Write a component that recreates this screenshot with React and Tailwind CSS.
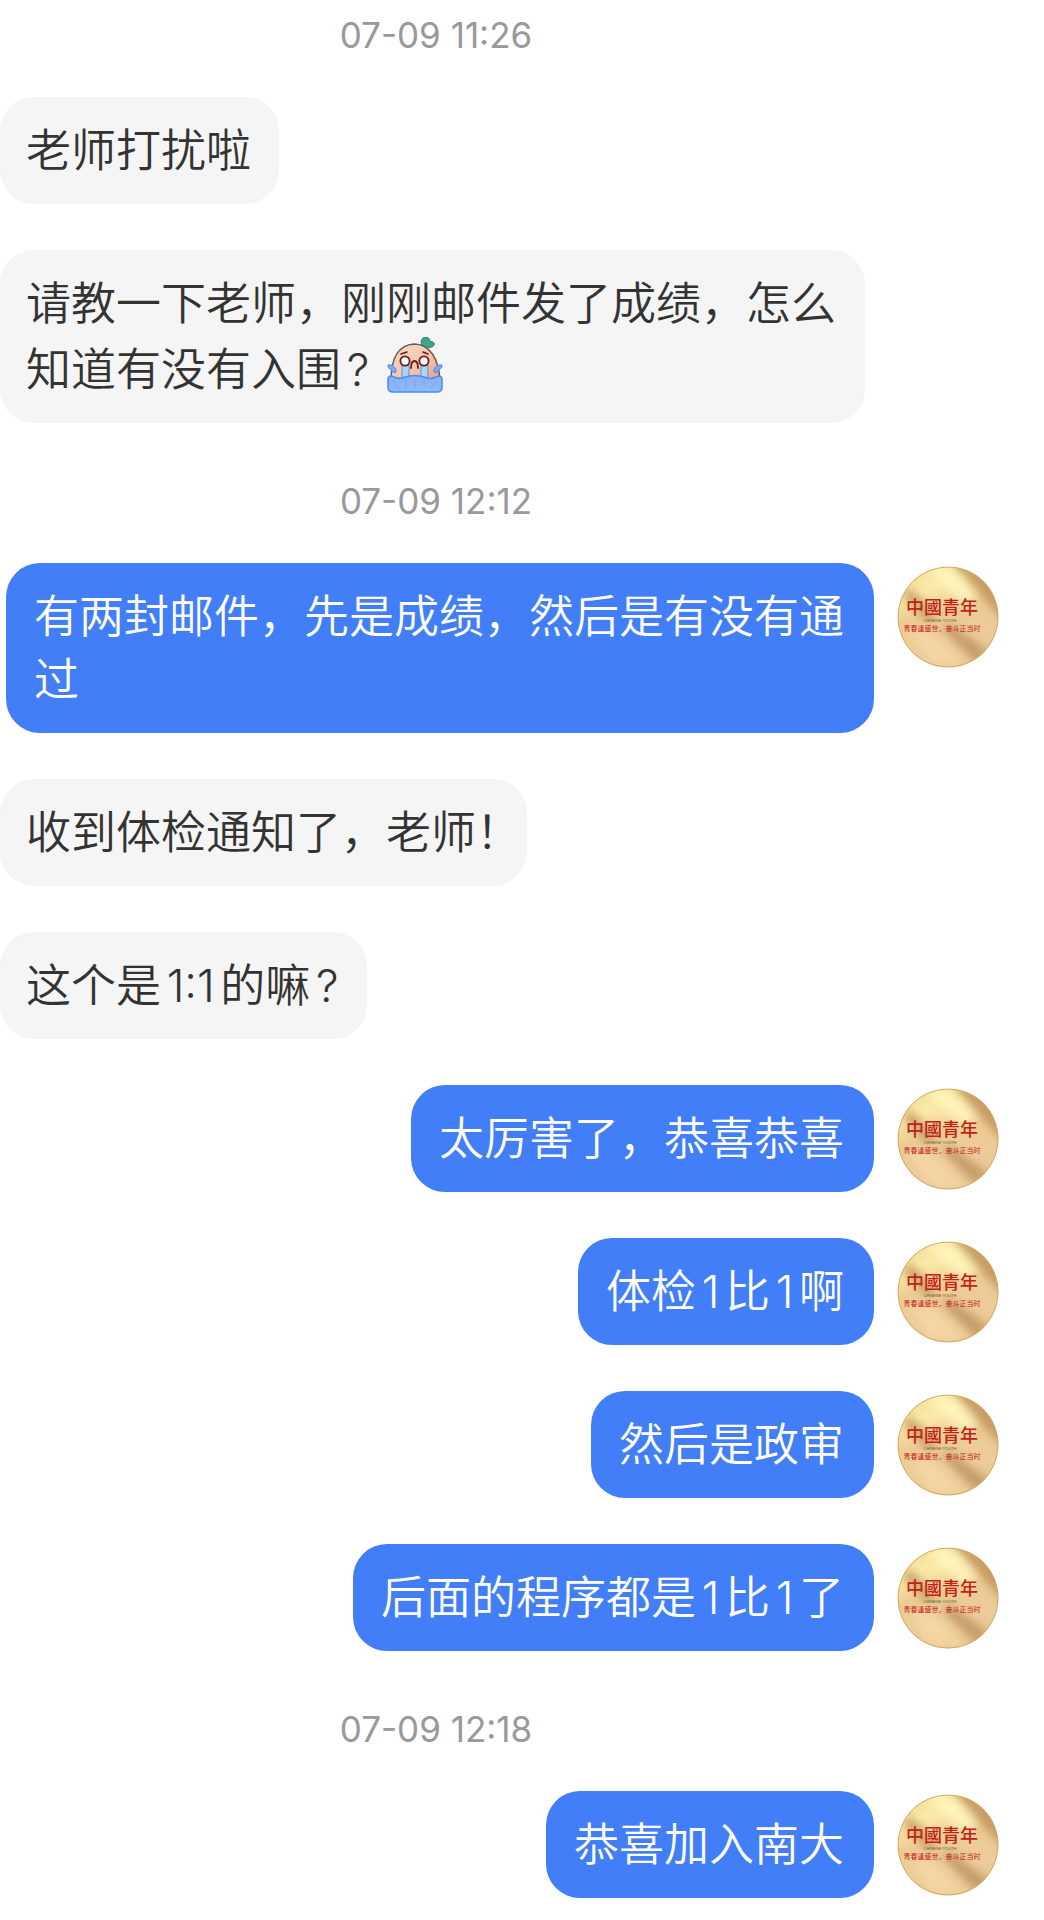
import React from "react";

const conversation = [
  { kind: "time", text: "07-09 11:26" },
  { kind: "in", text: "老师打扰啦" },
  { kind: "in", text: "请教一下老师，刚刚邮件发了成绩，怎么知道有没有入围?", sticker: true },
  { kind: "time", text: "07-09 12:12" },
  { kind: "out", text: "有两封邮件，先是成绩，然后是有没有通过" },
  { kind: "in", text: "收到体检通知了，老师", end: "！" },
  { kind: "in", text: "这个是1:1的嘛?" },
  { kind: "out", text: "太厉害了，恭喜恭喜" },
  { kind: "out", text: "体检1比1啊" },
  { kind: "out", text: "然后是政审" },
  { kind: "out", text: "后面的程序都是1比1了" },
  { kind: "time", text: "07-09 12:18" },
  { kind: "out", text: "恭喜加入南大" },
];

function CryingSticker() {
  return (
    <svg
      viewBox="0 0 56 56"
      role="img"
      aria-label="大哭"
      className="ml-[18px] mt-0.5 inline-block size-14 align-[-7px]"
    >
      <defs>
        <linearGradient id="skin" x1="0" y1="0" x2="1" y2="1">
          <stop offset="0" stopColor="#f6dcc8" />
          <stop offset="0.6" stopColor="#f3c3ac" />
          <stop offset="1" stopColor="#e09a86" />
        </linearGradient>
        <linearGradient id="water" x1="0" y1="0" x2="0" y2="1">
          <stop offset="0" stopColor="#86aef0" />
          <stop offset="1" stopColor="#8fbcff" />
        </linearGradient>
      </defs>
      <path d="M4 44C4 22 11 8 27 7c16 0 25 15 26 37z" fill="url(#skin)" stroke="#6d5550" strokeWidth="1.4" />
      <path d="M35 8c-2-4 0-8 4-8 3 0 4 3 4 5 3-1 5 1 4 3-1 3-6 3-10 1z" fill="#3fa587" stroke="#2b7b66" strokeWidth="1" />
      <path d="M15 28h7v14h-7zM34 28h7v14h-7z" fill="#a9d6f4" stroke="#5b93df" strokeWidth="1" />
      <circle cx="18" cy="24" r="4.6" fill="#fff" stroke="#6a1c17" strokeWidth="1.8" />
      <circle cx="37" cy="24" r="4.6" fill="#fff" stroke="#6a1c17" strokeWidth="1.8" />
      <path d="M14 17l6-2M36 15l5 2" fill="none" stroke="#6a1c17" strokeWidth="1.6" strokeLinecap="round" />
      <path d="M24 31c0-5 1-7 3.500-7s3.500 2 3.500 7" fill="none" stroke="#6a1c17" strokeWidth="1.8" strokeLinecap="round" />
      <path d="M1 28c4-1 9 3 8 7-3 1-5 0-5-3-2 0-3-1-3-4zM55 28c-4-1-9 3-8 7 3 1 5 0 5-3 2 0 3-1 3-4z" fill="#78adf5" stroke="#4a86e8" strokeWidth="1" />
      <path d="M1 42c0-3 3-4 6-2 4 2 7 2 11 0 6-2 13-2 19 0 4 2 8 2 12 0 4-2 6 0 6 2v8c0 3-2 5-5 5H6c-3 0-5-2-5-5z" fill="url(#water)" stroke="#4c8cf2" strokeWidth="1.5" />
      <path d="M7 44c1 4 3 6 7 7M19 43v8M28 42v9M37 43v8M49 44c-1 4-3 6-7 7" fill="none" stroke="#769ce6" strokeWidth="1" opacity="0.7" />
    </svg>
  );
}

function Avatar() {
  return (
    <svg viewBox="0 0 102 102" role="img" aria-label="中國青年" className="mt-[3px] size-[102px] shrink-0">
      <defs>
        <linearGradient id="gold" x1="0.3" y1="0" x2="0.6" y2="1">
          <stop offset="0" stopColor="#f3dc96" />
          <stop offset="0.2" stopColor="#fbeaa9" />
          <stop offset="0.45" stopColor="#eccb93" />
          <stop offset="0.75" stopColor="#edcb9a" />
          <stop offset="1" stopColor="#e8c88f" />
        </linearGradient>
        <filter id="soft" x="-30%" y="-30%" width="160%" height="160%">
          <feGaussianBlur stdDeviation="4" />
        </filter>
        <clipPath id="disc">
          <circle cx="51" cy="51" r="50.5" />
        </clipPath>
      </defs>
      <g clipPath="url(#disc)">
        <rect width="102" height="102" fill="url(#gold)" />
        <g filter="url(#soft)">
          <path d="M54-4 108 56V16L80-6z" fill="#c0935a" opacity="0.85" />
          <path d="M28 4 48-2 78 28 70 40z" fill="#fff6bd" opacity="0.85" />
          <path d="M4 28 14 22 40 50 30 56z" fill="#bd9158" opacity="0.75" />
          <path d="M44 62 54 58 92 86 80 98z" fill="#b98d58" opacity="0.75" />
          <path d="M10 62 34 66 70 100H34z" fill="#f6d9a8" opacity="0.7" />
        </g>
        <circle cx="51" cy="51" r="50" fill="none" stroke="#cfaa6b" strokeWidth="1" />
      </g>
      <g textAnchor="middle" fill="#c0211a">
        <text x="45" y="48" fontSize="18" fontWeight="500" fontFamily="'Noto Sans CJK TC', sans-serif">
          中國青年
        </text>
        <text x="43" y="56" fontSize="4" fontWeight="400" fill="#5d5a35" fontFamily="'Liberation Sans', sans-serif">
          CHINESE YOUTH
        </text>
        <text x="45" y="65" fontSize="7" fontWeight="400" fontFamily="'Noto Sans CJK SC', sans-serif">
          青春逢盛世，奋斗正当时
        </text>
      </g>
    </svg>
  );
}

function TimeStamp({ text }) {
  return (
    <li className="pr-[172px] pt-4 text-center text-[35px] font-normal leading-[32px] text-[#999999]">
      <time>{text}</time>
    </li>
  );
}

function Incoming({ text, end, sticker }) {
  return (
    <li className="flex pr-[170px]">
      <p className="max-w-[865px] rounded-[34px] bg-[#f5f5f5] py-[22px] pl-[26px] pr-7 text-[#333333]">
        {text}
        {end && <span className="[font-feature-settings:'halt']">{end}</span>}
        {sticker && <CryingSticker />}
      </p>
    </li>
  );
}

function Outgoing({ text }) {
  return (
    <li className="flex items-start justify-end gap-[23px] pr-[45px]">
      <p className="max-w-[868px] rounded-[34px] bg-[#427ef8] py-[22px] pl-7 pr-[30px] text-white">{text}</p>
      <Avatar />
    </li>
  );
}

export default function App() {
  return (
    <main
      lang="zh-CN"
      className="min-h-screen bg-white pt-[3px] font-['Inter','Noto_Sans_CJK_SC',sans-serif]"
    >
      <ol className="flex flex-col gap-[46px] text-[45px] font-[350] leading-[63px] [text-autospace:normal]">
        {conversation.map((item, i) => {
          if (item.kind === "time") return <TimeStamp key={i} text={item.text} />;
          if (item.kind === "in")
            return <Incoming key={i} text={item.text} end={item.end} sticker={item.sticker} />;
          return <Outgoing key={i} text={item.text} />;
        })}
      </ol>
    </main>
  );
}
